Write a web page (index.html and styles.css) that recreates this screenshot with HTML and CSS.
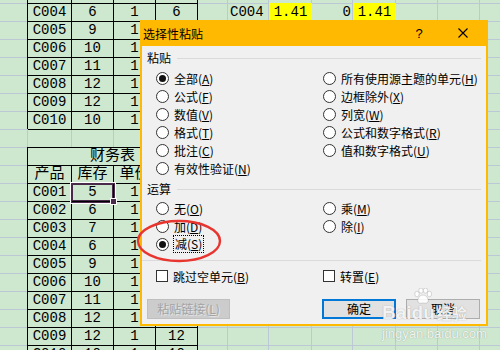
FILE: index.html
```html
<!DOCTYPE html>
<html lang="zh-CN">
<head>
<meta charset="utf-8">
<title>选择性粘贴</title>
<link rel="stylesheet" href="styles.css">
</head>
<body>
<div class="sheet">
  <div class="tbl t1">
    <div></div><div></div><div></div><div></div>
    <div>C004</div><div>6</div><div>1</div><div>6</div>
    <div>C005</div><div>9</div><div>1</div><div></div>
    <div>C006</div><div>10</div><div>1</div><div></div>
    <div>C007</div><div>11</div><div>1</div><div></div>
    <div>C008</div><div>12</div><div>1</div><div></div>
    <div>C009</div><div>12</div><div>1</div><div></div>
    <div>C010</div><div>10</div><div>1</div><div></div>
  </div>
  <div class="cell c-id">C004</div>
  <div class="cell c-a hl">1.41</div>
  <div class="cell c-b num">0</div>
  <div class="cell c-c hl">1.41</div>
  <div class="tbl t2">
    <div class="cn span">财务表</div>
    <div class="cn">产品</div><div class="cn">库存</div><div class="cn">单价</div><div></div>
    <div>C001</div><div class="sel">5</div><div>1</div><div></div>
    <div>C002</div><div>6</div><div>1</div><div></div>
    <div>C003</div><div>7</div><div>1</div><div></div>
    <div>C004</div><div>6</div><div>1</div><div></div>
    <div>C005</div><div>9</div><div>1</div><div></div>
    <div>C006</div><div>10</div><div>1</div><div></div>
    <div>C007</div><div>11</div><div>1</div><div></div>
    <div>C008</div><div>12</div><div>1</div><div></div>
    <div>C009</div><div>12</div><div>1</div><div>12</div>
    <div>C010</div><div>10</div><div>1</div><div>10</div>
  </div>
</div>

<div class="dialog">
  <div class="titlebar">
    <span class="title">选择性粘贴</span>
    <span class="help">?</span>
    <svg class="close" width="10" height="10" viewBox="0 0 10 10"><path d="M0.5 0.5 L9.5 9.5 M9.5 0.5 L0.5 9.5" stroke="#000" stroke-width="1.1" fill="none"/></svg>
  </div>
  <div class="dbody">
    <div class="ghead"><span>粘贴</span><i class="rule"></i></div>
    <div class="opts six">
      <div class="opt"><span class="radio on"></span><span>全部(<u>A</u>)</span></div>
      <div class="opt"><span class="radio"></span><span>所有使用源主题的单元(<u>H</u>)</span></div>
      <div class="opt"><span class="radio"></span><span>公式(<u>F</u>)</span></div>
      <div class="opt"><span class="radio"></span><span>边框除外(<u>X</u>)</span></div>
      <div class="opt"><span class="radio"></span><span>数值(<u>V</u>)</span></div>
      <div class="opt"><span class="radio"></span><span>列宽(<u>W</u>)</span></div>
      <div class="opt"><span class="radio"></span><span>格式(<u>T</u>)</span></div>
      <div class="opt"><span class="radio"></span><span>公式和数字格式(<u>R</u>)</span></div>
      <div class="opt"><span class="radio"></span><span>批注(<u>C</u>)</span></div>
      <div class="opt"><span class="radio"></span><span>值和数字格式(<u>U</u>)</span></div>
      <div class="opt"><span class="radio"></span><span>有效性验证(<u>N</u>)</span></div>
    </div>
    <div class="ghead g2"><span>运算</span><i class="rule"></i></div>
    <div class="opts three">
      <div class="opt"><span class="radio"></span><span>无(<u>O</u>)</span></div>
      <div class="opt"><span class="radio"></span><span>乘(<u>M</u>)</span></div>
      <div class="opt"><span class="radio"></span><span>加(<u>D</u>)</span></div>
      <div class="opt"><span class="radio"></span><span>除(<u>I</u>)</span></div>
      <div class="opt"><span class="radio on"></span><span class="focus">减(<u>S</u>)</span></div>
    </div>
    <div class="sep"></div>
    <div class="opts checks">
      <div class="opt"><span class="check"></span><span>跳过空单元(<u>B</u>)</span></div>
      <div class="opt"><span class="check"></span><span>转置(<u>E</u>)</span></div>
    </div>
    <div class="buttons">
      <span class="btn disabled">粘贴链接(<u>L</u>)</span>
      <span class="btn primary">确定</span>
      <span class="btn">取消</span>
    </div>
  </div>
</div>

<svg class="mark" width="96" height="52" viewBox="0 0 96 52"><ellipse cx="43" cy="25" rx="41" ry="20" fill="none" stroke="#e8352f" stroke-width="2.4"/></svg>

<div class="wm">
  <div class="wm-logo"><span class="bai">Bai</span><span class="du"><svg class="paw" width="20" height="16" viewBox="0 0 20 16"><ellipse cx="4" cy="6" rx="2.2" ry="2.8"/><ellipse cx="8" cy="2.6" rx="2.2" ry="2.6"/><ellipse cx="12.5" cy="2.6" rx="2.2" ry="2.6"/><ellipse cx="16.4" cy="6" rx="2.2" ry="2.8"/><path d="M10 7 C6 7 4 12 5 14 C6 16 9 15 10 15 C11 15 14 16 15 14 C16 12 14 7 10 7Z"/></svg>du</span><span class="jy">经验</span></div>
  <div class="wm-url">jingyan.baidu.com</div>
</div>
</body>
</html>
```
FILE: styles.css
```css
html, body {
  margin: 0;
  padding: 0;
}
body {
  width: 500px;
  height: 350px;
  overflow: hidden;
  position: relative;
  background: #cde8cf;
}
.sheet {
  --g: #bcc8d6;
  display: grid;
  grid-template-columns: 28px 44px 42px 42px 42px 30px 41px 43px 41px 43px 42px 42px 40px;
  grid-template-rows: repeat(21, 18px);
  margin-top: -14px;
  width: 520px;
  font: 14px "Liberation Mono", "Noto Sans CJK SC", monospace;
  color: #000;
  background:
    linear-gradient(var(--g), var(--g)) 27px 0 / 1px 100% no-repeat,
    linear-gradient(var(--g), var(--g)) 71px 0 / 1px 100% no-repeat,
    linear-gradient(var(--g), var(--g)) 113px 0 / 1px 100% no-repeat,
    linear-gradient(var(--g), var(--g)) 155px 0 / 1px 100% no-repeat,
    linear-gradient(var(--g), var(--g)) 197px 0 / 1px 100% no-repeat,
    linear-gradient(var(--g), var(--g)) 227px 0 / 1px 100% no-repeat,
    linear-gradient(var(--g), var(--g)) 268px 0 / 1px 100% no-repeat,
    linear-gradient(var(--g), var(--g)) 311px 0 / 1px 100% no-repeat,
    linear-gradient(var(--g), var(--g)) 352px 0 / 1px 100% no-repeat,
    linear-gradient(var(--g), var(--g)) 395px 0 / 1px 100% no-repeat,
    linear-gradient(var(--g), var(--g)) 437px 0 / 1px 100% no-repeat,
    linear-gradient(var(--g), var(--g)) 479px 0 / 1px 100% no-repeat,
    repeating-linear-gradient(to bottom, transparent 0 17px, var(--g) 17px 18px),
    #cde8cf;
}
.tbl {
  display: grid;
  grid-template-columns: 44px 42px 42px 42px;
  grid-auto-rows: 18px;
  box-shadow: -1px -1px 0 #000;
  background: #cde8cf;
}
.tbl > div {
  border-right: 1px solid #000;
  border-bottom: 1px solid #000;
  text-align: center;
  line-height: 17px;
  white-space: nowrap;
  overflow: hidden;
}
.tbl > .cn {
  font-size: 15px;
}
.tbl > .span {
  grid-column: 1 / -1;
}
.t1 {
  grid-column: 2 / 6;
  grid-row: 1 / 9;
}
.t2 {
  grid-column: 2 / 6;
  grid-row: 10 / 22;
}
.tbl > .sel {
  position: relative;
  overflow: visible;
  box-shadow: inset 0 0 0 1px #4a2a4a, 0 0 0 1px #4a2a4a, 0 0 0 2px #fff;
}
.tbl > .sel::after {
  content: "";
  position: absolute;
  right: -4px;
  bottom: -4px;
  width: 5px;
  height: 5px;
  background: #4a2a4a;
  border: 1px solid #fff;
}
.cell {
  grid-row: 2;
  line-height: 17px;
  white-space: nowrap;
}
.c-id {
  grid-column: 7;
  padding-left: 2px;
}
.c-a {
  grid-column: 8;
}
.c-b {
  grid-column: 9;
  text-align: right;
  padding-right: 2px;
}
.c-c {
  grid-column: 10;
}
.hl {
  background: #ffff00;
  text-align: center;
  margin-top: -1px;
  line-height: 18px;
}

/* dialog */
.dialog {
  position: absolute;
  left: 140px;
  top: 20px;
  width: 348px;
  height: 306px;
  box-sizing: border-box;
  padding: 0 2px 2px 2px;
  background: #ffb900;
  display: flex;
  flex-direction: column;
  font: 12px "Noto Sans CJK SC", "Liberation Sans", sans-serif;
  color: #000;
}
.titlebar {
  height: 26px;
  display: flex;
  align-items: center;
  flex: none;
}
.title {
  flex: 1;
  padding-left: 1px;
  font-size: 12px;
}
.help {
  width: 10px;
  text-align: center;
  margin-right: 34px;
  font: 13px "Liberation Sans", sans-serif;
}
.close {
  margin-right: 18px;
}
.dbody {
  flex: 1;
  background: #f0f0f0;
  display: flex;
  flex-direction: column;
}
.ghead {
  height: 14px;
  margin-top: 5px;
  padding: 0 5px;
  display: flex;
  align-items: center;
  gap: 6px;
  line-height: 14px;
}
.rule {
  flex: 1;
  height: 1px;
  background: #dadada;
}
.opts {
  display: grid;
  grid-template-columns: 167px 1fr;
  grid-auto-rows: 18px;
  padding-left: 14px;
}
.opts.six {
  margin-top: 4px;
}
.opts.three {
  margin-top: 3px;
}
.opts.checks {
  margin-top: 6px;
}
.opt {
  display: flex;
  align-items: center;
  gap: 5px;
  white-space: nowrap;
}
.opt u {
  text-decoration: underline;
  text-underline-offset: 1px;
}
.radio {
  width: 13px;
  height: 13px;
  box-sizing: border-box;
  border: 1px solid #333;
  border-radius: 50%;
  background: #fff;
  flex: none;
  position: relative;
}
.radio.on::after {
  content: "";
  position: absolute;
  inset: 2px;
  border-radius: 50%;
  background: #111;
}
.check {
  width: 12px;
  height: 12px;
  box-sizing: border-box;
  border: 1px solid #333;
  background: #fff;
  flex: none;
}
.focus {
  outline: 1px dotted #000;
  outline-offset: 0;
  padding: 0 1px;
  line-height: 16px;
}
.sep {
  height: 1px;
  background: #dadada;
  margin: 7px 5px 0 0;
}
.buttons {
  display: flex;
  margin-top: 14px;
  padding: 0 6px 0 5px;
  gap: 10px;
}
.btn {
  width: 74px;
  height: 20px;
  box-sizing: border-box;
  border: 1px solid #adadad;
  background: #e1e1e1;
  display: flex;
  align-items: center;
  justify-content: center;
  line-height: 1;
}
.btn.disabled {
  width: 83px;
  margin-right: auto;
  background: #cccccc;
  border-color: #bfbfbf;
  color: #a3a3a3;
  text-shadow: 1px 1px 0 #e4e4e4;
}
.btn.primary {
  border: 2px solid #0078d7;
}

/* annotation */
.mark {
  position: absolute;
  left: 136px;
  top: 216px;
}

/* watermark */
.wm {
  position: absolute;
  left: 382px;
  top: 291px;
  color: rgba(255, 255, 255, 0.88);
  text-shadow: 0 0 1px rgba(90, 90, 90, 0.55);
  font-family: "Liberation Sans", sans-serif;
}
.wm-logo {
  display: flex;
  align-items: flex-end;
  height: 31px;
  font-weight: bold;
  font-size: 19px;
  line-height: 19px;
}
.du {
  display: inline-flex;
  flex-direction: column;
  align-items: center;
}
.paw {
  fill: rgba(255, 255, 255, 0.88);
  stroke: rgba(120, 120, 120, 0.45);
  stroke-width: 0.6;
  margin-bottom: -1px;
}
.jy {
  font: bold 15px "Noto Sans CJK SC", sans-serif;
  line-height: 19px;
  margin-left: 2px;
}
.wm-url {
  font-size: 13px;
  margin-top: 4px;
}
```
